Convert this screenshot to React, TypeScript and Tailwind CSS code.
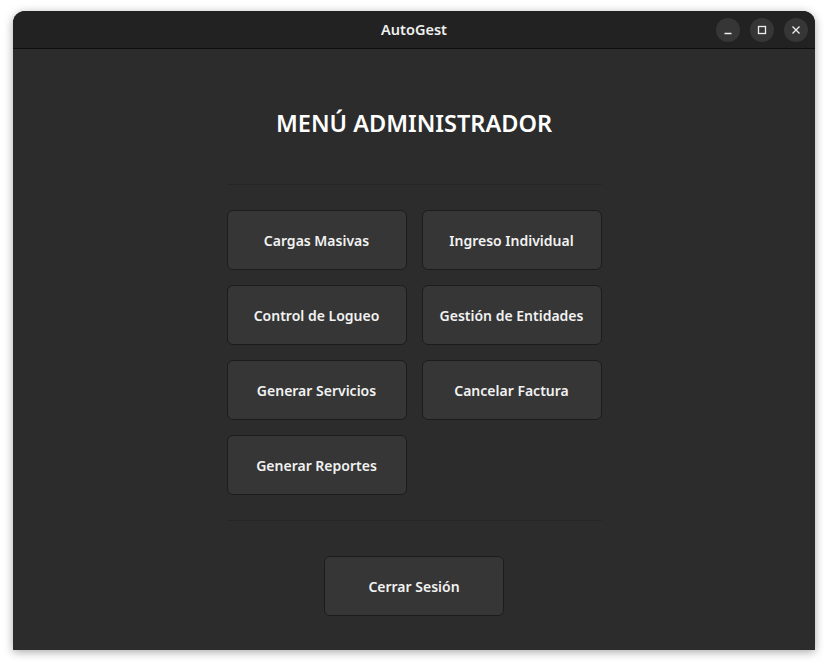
import React from 'react';

const font = { fontFamily: '"Noto Sans", "Open Sans", sans-serif' };

const MenuButton: React.FC<{ label: string }> = ({ label }) => (
  <button className="w-[180px] h-[60px] rounded-[6px] border border-[#1c1c1c] bg-[#363636] text-[#f2f2f2] text-[14px] font-semibold">
    {label}
  </button>
);

const WinButton: React.FC<{ children: React.ReactNode }> = ({ children }) => (
  <div className="w-[24px] h-[24px] rounded-full bg-[#363636] flex items-center justify-center">
    {children}
  </div>
);

const App: React.FC = () => {
  const items = [
    'Cargas Masivas',
    'Ingreso Individual',
    'Control de Logueo',
    'Gestión de Entidades',
    'Generar Servicios',
    'Cancelar Factura',
    'Generar Reportes',
  ];

  return (
    <div className="w-[828px] h-[666px] bg-white pt-[11px] pl-[13px]" style={font}>
      <div className="w-[802px] h-[639px] rounded-t-[12px] overflow-hidden flex flex-col shadow-[0_2px_10px_rgba(0,0,0,0.35)] bg-[#2c2c2c]">
        <div className="h-[38px] bg-[#222222] border-b border-[#0f0f0f] flex items-center relative shrink-0">
          <div className="flex-1 text-center text-[14.5px] font-semibold text-[#f0f0f0]">AutoGest</div>
          <div className="absolute right-[7px] top-[7px] flex gap-[10px]">
            <WinButton>
              <svg width="10" height="10" viewBox="0 0 10 10"><path d="M1.5 8.5h7" stroke="#eee" strokeWidth="1.3" /></svg>
            </WinButton>
            <WinButton>
              <svg width="10" height="10" viewBox="0 0 10 10"><rect x="1.5" y="1.5" width="7" height="7" fill="none" stroke="#eee" strokeWidth="1.3" /></svg>
            </WinButton>
            <WinButton>
              <svg width="10" height="10" viewBox="0 0 10 10"><path d="M1.5 1.5l7 7M8.5 1.5l-7 7" stroke="#eee" strokeWidth="1.3" /></svg>
            </WinButton>
          </div>
        </div>
        <div className="flex-1 flex flex-col items-center pt-[60px]">
          <h1 className="text-[23.5px] leading-[28px] font-semibold text-white">MENÚ ADMINISTRADOR</h1>
          <div className="w-[375px] h-px bg-[#262626] mt-[47px]" />
          <div className="grid grid-cols-[180px_180px] gap-[15px] mt-[25px]">
            {items.map((label) => (
              <MenuButton key={label} label={label} />
            ))}
          </div>
          <div className="w-[375px] h-px bg-[#262626] mt-[25px]" />
          <div className="mt-[35px]">
            <MenuButton label="Cerrar Sesión" />
          </div>
        </div>
      </div>
    </div>
  );
};

export default App;
